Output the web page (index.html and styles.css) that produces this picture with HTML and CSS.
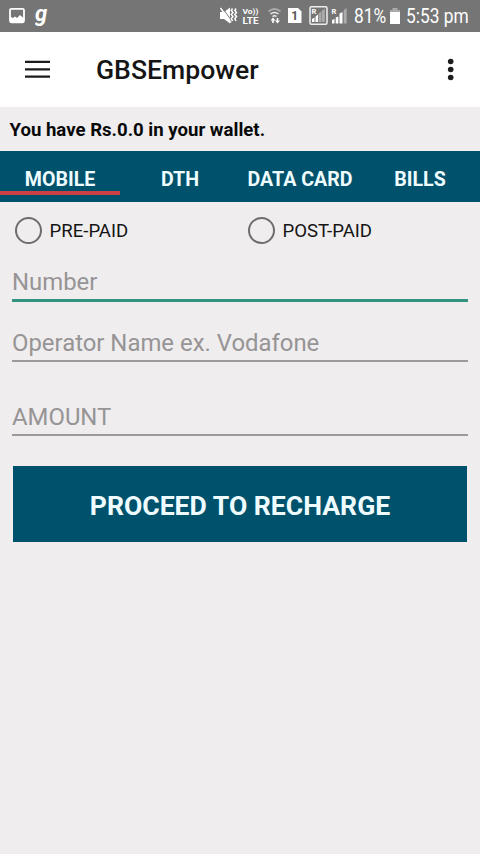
FILE: index.html
```html
<!DOCTYPE html>
<html lang="en">
<head>
<meta charset="utf-8">
<title>GBSEmpower</title>
<link rel="stylesheet" href="styles.css">
</head>
<body>
<div class="status">
  <svg class="status-left" width="60" height="32" viewBox="0 0 60 32">
    <rect x="10" y="8.800" width="14" height="13.500" rx="1.500" fill="none" stroke="#fff" stroke-width="1.800"/>
    <path d="M10 16.500l3 1.500 2-1.500 2 1.500 3-3 4 3.500v4H10z" fill="#fff"/>
    <text class="brand" x="35" y="20.500">g</text>
  </svg>
  <svg class="status-icons" width="134" height="32" viewBox="216 0 134 32">
    <path d="M220 12h4l6-4.500v16l-6-4.500h-4z" fill="#fff"/>
    <path d="M222 7.500l9.500 13" stroke="#757575" stroke-width="1"/>
    <path d="M220.500 8l10.500 14.500" stroke="#fff" stroke-width="1.500"/>
    <path d="M232.500 8.500l-1.200 2 1.700 2-1.700 2 1.700 2-1.700 2 1.200 2.500M236 8.500l-1.200 2 1.700 2-1.700 2 1.700 2-1.700 2 1.200 2.500" fill="none" stroke="#fff" stroke-width="1.500"/>
    <text class="volte" x="242.500" y="14.300" textLength="16" lengthAdjust="spacingAndGlyphs">Vo))</text>
    <text class="volte lte" x="242.500" y="23.700" textLength="16" lengthAdjust="spacingAndGlyphs">LTE</text>
    <path d="M268.500 11.500q6-5 12 0" fill="none" stroke="#aaa" stroke-width="2"/>
    <path d="M270.500 14q4-3 8 0M272.500 16.500q2-1.500 4 0" fill="none" stroke="#eee" stroke-width="1.500"/>
    <path d="M273 17.500l-2.500 3h1.700v2.500h1.600v-2.500h1.700zM277.500 23.500l-2.500-3h1.700V18h1.600v2.500h1.700z" fill="#fff"/>
    <path d="M288 8h10l3.500 3.500V23H288z" fill="#fff"/>
    <text class="sim" x="291.300" y="20">1</text>
    <rect x="310" y="6.800" width="17" height="17.500" rx="1.500" fill="none" stroke="#eee" stroke-width="1.500"/>
    <text class="roam" x="311.500" y="14">R</text>
    <path d="M312 22v-3l2.500-1.500V22zM315.500 22v-5.500l2.500-2V22z" fill="#fff"/>
    <path d="M318.500 22v-8.500l2.800-2V22zM321.800 22V11l3-2.500V22z" fill="#aaa"/>
    <text class="roam" x="331.500" y="13.500">R</text>
    <path d="M332 23.500V20l2.500-1v4.500zM335.700 23.500V17.500l2.700-1v7zM339.500 23.500v-10l3-1.500v11.500z" fill="#fff"/>
    <path d="M343.700 23.500V10l3-2v15.500z" fill="#aaa"/>
  </svg>
  <span class="battery-text"><span class="narrow">81%</span></span>
  <svg class="battery" width="12" height="18" viewBox="0 0 12 18">
    <path d="M3.500 1h5v2H11v3H1V3h2.500z" fill="#aaa"/><path d="M1 5h10v12H1z" fill="#fff"/>
  </svg>
  <span class="clock"><span class="narrow">5:53 pm</span></span>
</div>
<header class="bar">
  <svg class="menu" width="26" height="20" viewBox="0 0 26 20"><path d="M0 1.800h25M0 9.300h25M0 16.700h25" stroke="#1c1c1c" stroke-width="2.300"/></svg>
  <h1 class="title">GBSEmpower</h1>
  <svg class="more" width="8" height="24" viewBox="0 0 8 24" fill="#1c1c1c"><circle cx="3.700" cy="3.500" r="2.800"/><circle cx="3.700" cy="11.500" r="2.800"/><circle cx="3.700" cy="19.500" r="2.800"/></svg>
</header>
<p class="wallet"><span>You have Rs.0.0 in your wallet.</span></p>
<nav class="tabs">
  <a class="tab active">MOBILE</a><a class="tab">DTH</a><a class="tab">DATA CARD</a><a class="tab">BILLS</a>
</nav>
<main class="form">
  <div class="radios">
    <label class="radio"><i class="ring"></i><span class="label">PRE-PAID</span></label>
    <label class="radio"><i class="ring"></i><span class="label">POST-PAID</span></label>
  </div>
  <div class="field focus"><span>Number</span></div>
  <div class="field operator"><span>Operator Name ex. Vodafone</span></div>
  <div class="field amount"><span>AMOUNT</span></div>
  <div class="submit"><span>PROCEED TO RECHARGE</span></div>
</main>
</body>
</html>
```
FILE: styles.css
```css
* { box-sizing: border-box; }
body { margin: 0; width: 480px; height: 854px; overflow: hidden; background: #efedee; font-family: Roboto, sans-serif; color: #151515; white-space: nowrap; }
.status { display: flex; height: 32px; background: #757575; color: #fff; line-height: 33px; font-size: 19.5px; }
.status-icons { margin-left: 156px; }
.brand { font: italic bold 22px Roboto, sans-serif; fill: #fff; }
.volte { font: bold 7.8px Roboto, sans-serif; fill: #fff; }
.lte { font-size: 9.5px; }
.sim { font: bold 12px Roboto, sans-serif; fill: #555; }
.roam { font: bold 7.5px Roboto, sans-serif; fill: #fff; }
.narrow { display: inline-block; transform: scaleX(.89); transform-origin: left; }
.battery-text { width: 35px; margin-left: 4px; }
.battery { margin: 7px 0 0; }
.clock { margin-left: 5px; }
.bar { display: flex; align-items: center; height: 75px; padding: 0 25px; background: #fff; }
.menu { flex: none; }
.title { margin: 1px 0 0 45px; font-size: 26.6px; font-weight: 500; line-height: 32px; }
.more { margin-left: auto; }
.wallet { height: 44px; margin: 0; padding-left: 9.5px; font-size: 18.6px; font-weight: 700; line-height: 46px; color: #090909; }
.tabs { display: grid; grid-template-columns: repeat(4, 1fr); height: 51px; background: #00526c; color: #effcff; }
.tab { height: 44px; padding-top: 2px; text-align: center; font-size: 19.6px; font-weight: 700; line-height: 53px; }
.active { border-bottom: 4px solid #cb4042; }
.form { padding: 0 12px; }
.radios { display: grid; grid-template-columns: 233px 1fr; height: 56px; padding-left: 2.5px; }
.radio { display: flex; align-items: center; gap: 8px; height: 56px; font-size: 18.6px; }
.label { padding-top: 2px; }
.ring { width: 27px; height: 27px; border: 2.5px solid #6d6d6d; border-radius: 50%; }
.field { height: 44px; border-bottom: 2px solid #9c9a9b; color: #969495; font-size: 23.9px; line-height: 48px; }
.focus { border-bottom: 3px solid #31947f; }
.operator { height: 60px; line-height: 82px; }
.amount { height: 74px; line-height: 110px; }
.submit { height: 76px; margin: 30px 1px 0; background: #00526c; color: #effcff; text-align: center; font-size: 26.6px; font-weight: 700; line-height: 79px; }
```
